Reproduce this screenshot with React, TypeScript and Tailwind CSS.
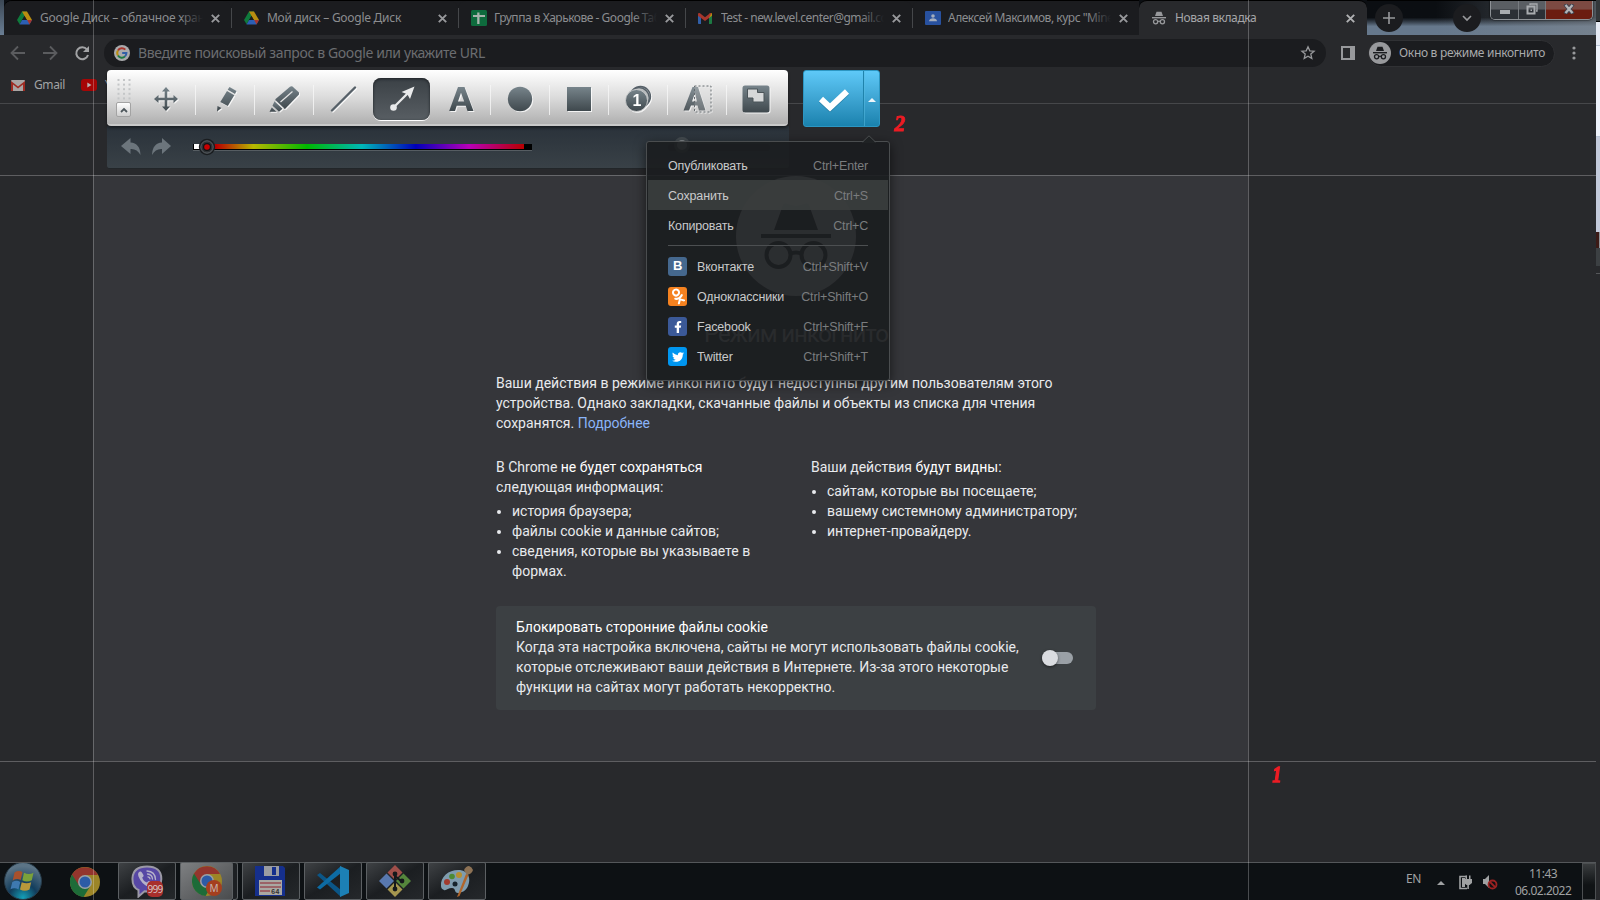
import type { ReactNode } from "react";
import { FaFacebookF, FaOdnoklassniki, FaTwitter } from "react-icons/fa";

function DriveIcon() {
  return (
    <svg width="15" height="14" viewBox="0 0 15 14" className="shrink-0">
      <path d="M5 .5h5l-2.4 4.3L5 9 2.6 13.3 0 9z" fill="#0f7a3c" />
      <path d="M5 .5h5l5 8.5H9.8z" fill="#b98d10" />
      <path d="M5.1 9H15l-2.5 4.4h-10z" fill="#2c5fb4" />
      <path d="M10.2 9H15l-2.5 4.4z" fill="#a8362c" />
      <path d="M7.5 5L9.8 9H5.2z" fill="#1b1c1f" />
    </svg>
  );
}

function SheetsIcon() {
  return (
    <svg width="16" height="16" viewBox="0 0 16 16" className="shrink-0">
      <rect width="16" height="16" rx="1.5" fill="#0e6b3d" />
      <path d="M2 5h12v2H2zM6.2 2.5h2.3V14H6.2z" fill="#a9b3ad" />
    </svg>
  );
}

function GmailIcon() {
  return (
    <svg width="14" height="11" viewBox="0 0 14 11" className="shrink-0">
      <path d="M0 2v8.2c0 .5.3.8.8.8H3V4z" fill="#315fa8" />
      <path d="M14 2v8.2c0 .5-.3.8-.8.8H11V4z" fill="#1d7a43" />
      <path d="M11 1l2-1c.6 0 1 .5 1 1.2v1.6L11 5z" fill="#b98d10" />
      <path d="M0 2.8V1.2C0 0 1.200-.2 2 .3l5 3.900 5-3.900c.5-.3 1-.2 1.300 0L11 5 7 8 3 5z" fill="#a8362c" />
    </svg>
  );
}

function ClassroomIcon() {
  return (
    <svg width="16" height="14" viewBox="0 0 16 14" className="shrink-0">
      <rect width="16" height="14" rx="1" fill="#28519f" />
      <circle cx="8" cy="5" r="1.8" fill="#a5aebd" />
      <path d="M4 10.300c0-2 2-3 4-3s4 1 4 3z" fill="#a5aebd" />
    </svg>
  );
}

function Incognito({ size, color }: { size: number; color: string }) {
  return (
    <svg width={size} height={size} viewBox="0 0 70 70" fill="none" className="shrink-0">
      <path d="M13 29 22 4q1-2 4-1.300l6 1.800q3 .8 6 0l6-1.800q3-.7 4 1.300l9 25z" fill={color} />
      <path d="M0 33h70v4H0z" fill={color} />
      <circle cx="17.500" cy="54" r="12" stroke={color} strokeWidth="4" />
      <circle cx="52.500" cy="54" r="12" stroke={color} strokeWidth="4" />
      <path d="M29 53q6-3 12 0" stroke={color} strokeWidth="4" />
    </svg>
  );
}

function IncognitoSmall({ color }: { color: string }) {
  return (
    <svg width="14" height="14" viewBox="0 0 14 14" fill="none" className="shrink-0">
      <path d="M3 5l1.500-4.300h5L11 5z" fill={color} />
      <path d="M0 6h14v1.400H0z" fill={color} />
      <circle cx="3.600" cy="10.700" r="2.100" stroke={color} strokeWidth="1.300" />
      <circle cx="10.400" cy="10.700" r="2.100" stroke={color} strokeWidth="1.300" />
      <path d="M5.700 10.300h2.600" stroke={color} strokeWidth="1.200" />
    </svg>
  );
}

function Close({ color }: { color: string }) {
  return (
    <svg width="9" height="9" viewBox="0 0 9 9" className="shrink-0">
      <path d="M.8.8l7.400 7.400M8.200.8L.8 8.200" stroke={color} strokeWidth="1.900" />
    </svg>
  );
}

function Tab({ icon, title, fade, last, spacing }: { icon: ReactNode; title: string; fade?: boolean; last?: boolean; spacing: string }) {
  return (
    <div className="relative flex h-[34px] w-[227px] items-center rounded-t-lg bg-[#1b1c1f] pl-[13px]">
      <div className="flex w-[23px] items-center">{icon}</div>
      <div className={"relative w-[163px] overflow-hidden text-[12px] whitespace-nowrap text-[#8b8d90] " + spacing}>
        {title}
        {fade && <div className="absolute top-0 right-0 h-full w-6 bg-linear-to-r from-transparent to-[#1b1c1f]" />}
      </div>
      <div className="ml-[8px]">
        <Close color="#98999c" />
      </div>
      {!last && <div className="absolute top-[7px] -right-px z-10 h-5 w-px bg-[#45474a]" />}
    </div>
  );
}

function TabStrip() {
  return (
    <div className="flex h-[35px] bg-linear-to-b from-[#0b0e12] from-50% to-[#66788c] to-75%">
      <div className="h-[35px] w-1 bg-linear-to-b from-[#3c4855] to-[#6a7e94]" />
      <div className="flex h-[35px] rounded-tl-lg border-t border-black bg-[#1b1c1f]">
        <Tab icon={<DriveIcon />} title="Google Диск – облачное хранилище" fade spacing="tracking-[-0.24px]" />
        <Tab icon={<DriveIcon />} title="Мой диск – Google Диск" spacing="tracking-[-0.27px]" />
        <Tab icon={<SheetsIcon />} title="Группа в Харькове - Google Таблицы" fade spacing="tracking-[-0.48px]" />
        <Tab icon={<GmailIcon />} title="Test - new.level.center@gmail.com" fade spacing="tracking-[-0.5px]" />
        <Tab icon={<ClassroomIcon />} title={'Алексей Максимов, курс "Minecraft"'} fade last spacing="tracking-[-0.48px]" />
      </div>
      <div className="flex h-[35px] w-[228px] items-center rounded-t-lg border-t border-black bg-[#28292c] pl-[13px]">
        <div className="flex w-[23px] items-center">
          <IncognitoSmall color="#98999c" />
        </div>
        <div className="w-[163px] text-[12px] tracking-[-0.4px] text-[#a5a6a9]">Новая вкладка</div>
        <div className="ml-[8px]">
          <Close color="#b0b1b3" />
        </div>
      </div>
      <div className="flex h-[35px] flex-1 border-t border-black bg-linear-to-r from-transparent from-30% to-[#7f8790]/60">
        <div className="mt-[3px] ml-2 flex size-7 items-center justify-center rounded-full bg-[#1b1c1f]">
          <svg width="12" height="12" viewBox="0 0 12 12">
            <path d="M6 0v12M0 6h12" stroke="#98999c" strokeWidth="1.600" />
          </svg>
        </div>
        <div className="mt-[3px] ml-[50px] flex size-7 items-center justify-center rounded-full bg-[#1b1c1f]">
          <svg width="10" height="7" viewBox="0 0 10 7" fill="none">
            <path d="M1 1l4 4 4-4" stroke="#98999c" strokeWidth="1.700" />
          </svg>
        </div>
        <div className="ml-[9px] flex h-[19px] w-[103px] overflow-hidden rounded-b-[5px] border border-t-0 border-[#8d9196] shadow-[0_0_2px_#000]">
          <div className="flex w-[28px] items-center justify-center border-r border-[#777b80] bg-linear-to-b from-[#5a5e63] from-45% to-[#2c3036] to-50%">
            <div className="mt-[3px] h-1 w-2.5 bg-[#a9acb0]" />
          </div>
          <div className="flex w-[27px] items-center justify-center border-r border-[#777b80] bg-linear-to-b from-[#5a5e63] from-45% to-[#2c3036] to-50%">
            <svg width="12" height="12" viewBox="0 0 12 12" fill="none" className="-mt-0.5">
              <path d="M4 2V1h7v7h-1" stroke="#a9acb0" strokeWidth="1.300" />
              <rect x="1.500" y="3.500" width="7" height="7" stroke="#a9acb0" strokeWidth="2" />
              <rect x="4.500" y="6.500" width="1.500" height="1.500" fill="#a9acb0" />
            </svg>
          </div>
          <div className="flex flex-1 items-center justify-center bg-linear-to-b from-[#7c4a42] from-45% to-[#6b1c10] to-50%">
            <svg width="12" height="10" viewBox="0 0 12 10" className="-mt-0.5">
              <path d="M2 0l8 10M10 0L2 10" stroke="#41434f" strokeWidth="4" />
              <path d="M2.500 1l7 8M9.500 1l-7 8" stroke="#b4b5b8" strokeWidth="2.300" />
            </svg>
          </div>
        </div>
      </div>
    </div>
  );
}

function AddressBar() {
  return (
    <div className="flex h-[35px] items-center bg-[#28292c] pt-px">
      <svg width="104" height="28" viewBox="0 0 104 28" fill="none" className="shrink-0">
        <path d="M25 14H12M18 7.500L11.500 14l6.500 6.500" stroke="#5b5c5f" strokeWidth="1.800" />
        <path d="M43 14h13M50 7.500l6.500 6.500-6.500 6.500" stroke="#5b5c5f" strokeWidth="1.800" />
        <path d="M87 10.500A6 6 0 1 0 88 16" stroke="#a2a3a5" strokeWidth="2" />
        <path d="M89 7v6h-6z" fill="#a2a3a5" />
      </svg>
      <div className="flex h-7 w-[1222px] items-center rounded-full bg-[#1b1c1f] pl-2.5">
        <svg width="16" height="16" viewBox="0 0 16 16" fill="none">
          <circle cx="8" cy="8" r="8" fill="#a9aaac" />
          <path d="M4 5.500A4.500 4.500 0 0 1 11.300 4.700" stroke="#a8362c" strokeWidth="2" />
          <path d="M4 5.500a4.500 4.500 0 0 0 0 5" stroke="#b98d10" strokeWidth="2" />
          <path d="M4 10.500a4.500 4.500 0 0 0 7 .9" stroke="#1d7a43" strokeWidth="2" />
          <path d="M8.200 8h4.200q0 2-1.400 3.400" stroke="#315fa8" strokeWidth="2" />
        </svg>
        <div className="mb-0.5 ml-2 flex-1 text-[14px] tracking-[-0.38px] text-[#6b6d70]">Введите поисковый запрос в Google или укажите URL</div>
        <svg width="16" height="16" viewBox="0 0 16 16" fill="none" className="mr-[10px]">
          <path d="M8 1.800l1.800 4 4.300.4-3.300 2.900 1 4.300L8 11.200l-3.800 2.200 1-4.300L1.900 6.200l4.300-.4z" stroke="#98999c" strokeWidth="1.300" />
        </svg>
      </div>
      <div className="ml-[15px] h-[14px] w-[14px] border-2 border-r-[5px] border-[#98999c]" />
      <div className="ml-[13px] flex h-[27px] w-[187px] items-center rounded-full border border-[#303134] bg-[#1b1c1f]">
        <div className="flex size-[22px] items-center justify-center rounded-full bg-[#98999c]">
          <IncognitoSmall color="#1b1c1f" />
        </div>
        <div className="ml-2 text-[12px] tracking-[-0.3px] whitespace-nowrap text-[#a9aaac]">Окно в режиме инкогнито</div>
      </div>
      <svg width="4" height="16" viewBox="0 0 4 16" fill="#98999c" className="ml-[17px]">
        <circle cx="2" cy="3" r="1.600" />
        <circle cx="2" cy="8" r="1.600" />
        <circle cx="2" cy="13" r="1.600" />
      </svg>
    </div>
  );
}

function Bookmarks() {
  return (
    <div className="flex h-[34px] items-center border-b border-[#46474a] bg-[#28292c] pb-[3px] pl-[11px] text-[12px] text-[#a2a3a5]">
      <svg width="14" height="11" viewBox="0 0 14 11">
        <rect width="14" height="11" rx="1" fill="#a9a5a4" />
        <path d="M0 11V1l7 5.500L14 1v10h-2V4.500L7 8.500 2 4.500V11z" fill="#9e2b22" />
      </svg>
      <span className="ml-[9px] w-[47px] tracking-[-0.4px]">Gmail</span>
      <svg width="16" height="12" viewBox="0 0 16 12">
        <rect width="16" height="12" rx="3" fill="#a60606" />
        <path d="M6.300 3.500v5L10.500 6z" fill="#b9b2b2" />
      </svg>
      <span className="ml-2">YouTube</span>
    </div>
  );
}

function IncognitoPage() {
  return (
    <div className="h-[758px] bg-[#28292c] pt-[71px] pl-[93px] text-[#e8eaed]">
      <div className="flex h-[586px] w-[1155px] flex-col bg-[#35363a] pl-[403px] font-[Roboto,sans-serif] text-[14px] leading-5">
        <div className="flex w-[600px] flex-col items-center">
          <div className="mt-px flex size-[120px] items-center justify-center rounded-full bg-[#d5d8dc]">
            <Incognito size={70} color="#2a2c2f" />
          </div>
          <div className="mt-[22px] mb-px flex h-8 items-center text-[24px] tracking-[-1.1px] whitespace-nowrap text-[#b9bbbe]">Режим инкогнито</div>
        </div>
        <p className="mt-[22px] w-[600px]">
          Ваши действия в режиме инкогнито будут недоступны другим пользователям этого
          <br />
          устройства. Однако закладки, скачанные файлы и объекты из списка для чтения
          <br />
          сохранятся. <span className="text-[#8ab4f8]">Подробнее</span>
        </p>
        <div className="mt-6 flex h-[149px] w-[600px]">
          <div className="w-[315px] whitespace-nowrap">
            <div>
              В Chrome <span className="text-white">не будет сохраняться</span>
              <br />
              следующая информация:
            </div>
            <ul className="mt-1 list-disc pl-4">
              <li>история браузера;</li>
              <li>файлы cookie и данные сайтов;</li>
              <li>
                сведения, которые вы указываете в<br />
                формах.
              </li>
            </ul>
          </div>
          <div className="whitespace-nowrap">
            <div>
              Ваши действия <span className="text-white">будут видны:</span>
            </div>
            <ul className="mt-1 list-disc pl-4">
              <li>сайтам, которые вы посещаете;</li>
              <li>вашему системному администратору;</li>
              <li>интернет-провайдеру.</li>
            </ul>
          </div>
        </div>
        <div className="flex h-[104px] w-[600px] items-center justify-between rounded bg-[#3c4043] pr-[23px] pl-5">
          <div className="mb-0.5 whitespace-nowrap">
            <div className="text-white">Блокировать сторонние файлы cookie</div>
            <div>
              Когда эта настройка включена, сайты не могут использовать файлы cookie,
              <br />
              которые отслеживают ваши действия в Интернете. Из-за этого некоторые
              <br />
              функции на сайтах могут работать некорректно.
            </div>
          </div>
          <div className="flex h-4 w-[31px] items-center">
            <div className="flex h-3 w-[31px] items-center rounded-full bg-[#9aa0a6]">
              <div className="size-4 rounded-full bg-[#dadce0] shadow-[0_1px_3px_rgba(0,0,0,0.5)]" />
            </div>
          </div>
        </div>
      </div>
    </div>
  );
}

function Chrome() {
  return (
    <svg width="30" height="30" viewBox="0 0 30 30">
      <circle cx="15" cy="15" r="15" fill="#9c8527" />
      <path d="M15 15L2 7.500A15 15 0 0 0 13.500 30L21 18z" fill="#1d6b38" />
      <path d="M2 7.500A15 15 0 0 1 28 8H15L9 18.500z" fill="#93352d" />
      <circle cx="15" cy="15" r="7" fill="#9aa0a6" />
      <circle cx="15" cy="15" r="5.500" fill="#2c5ba6" />
    </svg>
  );
}

function Viber() {
  return (
    <svg width="32" height="33" viewBox="0 0 32 33" fill="none">
      <path d="M16 1.500c-9 0-14 4-14.500 11.500-.3 6 1.500 10 6 12v6.500l6-5.200c10 .7 16.300-2.300 16.800-12C30.500 5.500 25 1.500 16 1.500z" fill="#5747a5" stroke="#9b99a6" strokeWidth="2" />
      <path d="M9 6.500c-2 1-2.300 2.500-1.500 5 2 5 5.500 8.500 10 10.500 2 .7 3.500-.3 4.500-2 .4-1-.2-1.600-3.600-3.800-1-.4-1.700.6-2.400 1.300-2.500-.8-4-2.500-4.800-5 1-.7 1.800-1.300 1.200-2.500C11 7.500 10.300 6 9 6.500z" fill="#b5b1c9" />
      <path d="M16 6c5 .3 8.300 3.500 8.500 8.500M16.500 9c3 .3 4.800 2 5 5M17 11.800c1.300.2 1.900.8 2 2" stroke="#b5b1c9" strokeWidth="1.300" strokeLinecap="round" />
    </svg>
  );
}

function TaskButton({ active, children }: { active?: boolean; children: ReactNode }) {
  return (
    <div
      className={
        "relative flex h-[38px] items-center justify-center rounded-[2px] border border-[#5c6063] " +
        (active ? "w-[53px] bg-linear-to-br from-[#7e8082] to-[#4a4c4e]" : "w-[58px] bg-linear-to-br from-[#3f4245] via-[#1b1e21] to-[#25282b]")
      }
    >
      {children}
    </div>
  );
}

function Taskbar() {
  return (
    <div className="flex h-[38px] border-t border-[#54575a] bg-[#0d1114]">
      <svg width="46" height="38" viewBox="0 0 46 38" className="shrink-0">
        <defs>
          <radialGradient id="orb" cx=".5" cy=".95" r=".85">
            <stop offset="0" stopColor="#14a0b8" />
            <stop offset=".45" stopColor="#123d5c" />
            <stop offset="1" stopColor="#5c7486" />
          </radialGradient>
        </defs>
        <circle cx="23" cy="18" r="18.500" fill="url(#orb)" stroke="#273c4a" />
        <path d="M14.500 9.500q4-2.500 8-.5l-1.800 8q-4-2-8 .5z" fill="#a8512d" />
        <path d="M24 9.800q5 2.500 9.500 0l-1.700 7.500q-5 2.500-9.500 0z" fill="#7ba13a" />
        <path d="M12.300 19q4.500-2.500 8 0l-1.800 7.500q-4-2.500-8-.2z" fill="#3e79b0" />
        <path d="M21.700 19.200q5 2.300 9.500 0l-1.700 7.300q-4.800 2.500-9.500 0z" fill="#b8983a" />
      </svg>
      <div className="ml-6 flex w-[48px] items-center">
        <Chrome />
      </div>
      <div className="-mt-px flex gap-1">
        <TaskButton>
          <div className="relative flex h-[33px] w-[32px] items-center justify-center">
            <Viber />
            <div className="absolute top-[16px] left-[16px] flex h-4 w-4 items-center justify-center rounded-[5px] bg-[#a82f2c] text-[10px] leading-4 tracking-[-0.7px] text-[#d5c4c4]">
              <span>999</span>
            </div>
          </div>
        </TaskButton>
        <div className="flex">
          <TaskButton active>
            <Chrome />
            <div className="absolute right-[10px] bottom-[3px] size-4 rounded-full bg-[#a53f1f] text-center text-[10px] leading-4 text-[#c5b5ae]">M</div>
          </TaskButton>
          <div className="h-[38px] w-[5px] rounded-r-[3px] border border-l-0 border-[#5c6063] bg-[#1d2023]" />
        </div>
        <TaskButton>
          <svg width="31" height="32" viewBox="0 0 31 32" className="mr-0.5">
            <path d="M0 1h28l2 2v28H0z" fill="#152f8c" />
            <path d="M9 1h15v10H9z" fill="#9a9ca2" />
            <path d="M17 2h4v8h-4z" fill="#152f8c" />
            <path d="M4 15h23v15H4z" fill="#a9a7a2" />
            <path d="M5 18h21M5 22h21M5 26h10" stroke="#8d1f2c" strokeWidth="1" />
            <text x="16" y="29" fontSize="7" fontWeight="700" fontFamily="Liberation Mono, monospace" fill="#333">64</text>
          </svg>
        </TaskButton>
        <TaskButton>
          <svg width="32" height="31" viewBox="0 0 32 31">
            <path d="M0 9l3-2 21 17v7z" fill="#0b5687" />
            <path d="M0 21.500l3 2L24 7V0z" fill="#0d6ba3" />
            <path d="M23 0l9 4v23l-9 4z" fill="#1c80b5" />
          </svg>
        </TaskButton>
        <TaskButton>
          <svg width="32" height="32" viewBox="0 0 32 32">
            <path d="M16 0l7.500 7.500L16 15 8.500 7.500z" fill="#a04f4a" />
            <path d="M24.500 8.500L32 16l-7.500 7.500L17 16z" fill="#55863c" />
            <path d="M7.500 8.500L15 16l-7.500 7.500L0 16z" fill="#5878ae" />
            <path d="M16 17l7.500 7.500L16 32l-7.500-7.500z" fill="#a5964f" />
            <path d="M16 9v15M16 11l6 5" stroke="#15181b" strokeWidth="2" />
            <circle cx="16" cy="9" r="2.400" fill="#15181b" />
            <circle cx="16" cy="24" r="2.400" fill="#15181b" />
            <circle cx="23" cy="16" r="2.400" fill="#15181b" />
          </svg>
        </TaskButton>
        <TaskButton>
          <svg width="34" height="32" viewBox="0 0 34 32">
            <path d="M1 21C0 11 10 4 20 5c9 1 11 9 8 16-2 5-7 7-10 7-4 0-2-5-6-5s-6 3-8 2-3-2-3-4z" fill="#7f9cae" />
            <circle cx="7" cy="17" r="3" fill="#a13b2e" />
            <circle cx="12" cy="11.500" r="2.800" fill="#4c8a34" />
            <circle cx="19" cy="10" r="3" fill="#b8902f" />
            <circle cx="15" cy="19" r="2.500" fill="#16242d" />
            <path d="M26 9l2.500 1-9 21-2.500 1z" fill="#b0652a" />
            <path d="M24 5q2-4 5-4 3 1 4 4-1 4-6 5z" fill="#8d7255" />
          </svg>
        </TaskButton>
      </div>
      <div className="ml-auto flex items-center text-[12px] text-[#a0a2a3]">
        <span className="mb-[5px] w-[31px] tracking-[-0.5px]">EN</span>
        <div className="mt-0.5 h-0 w-0 border-x-4 border-b-4 border-x-transparent border-b-[#a0a2a3]" />
        <svg width="15" height="16" viewBox="0 0 15 16" fill="none" className="mt-px ml-[13px]">
          <path d="M9 2.500H2v12h7" stroke="#a0a2a3" strokeWidth="1.600" />
          <path d="M4 4h3v9H4z" fill="#a0a2a3" />
          <path d="M6 5h8v4l-2.500 2H8.500L6 9zM7.500 1.500h1.500V5H7.500zM11 1.500h1.500V5H11zM9.300 11h1.600v4H9.300z" fill="#a0a2a3" />
        </svg>
        <svg width="16" height="16" viewBox="0 0 16 16" fill="none" className="mt-px ml-[9px]">
          <path d="M1 5h2l4-4v13L3 10H1z" fill="#a0a2a3" />
          <circle cx="10.500" cy="10.500" r="4" stroke="#9b2222" strokeWidth="1.800" />
          <path d="M8 8l5 5" stroke="#9b2222" strokeWidth="1.800" />
        </svg>
        <div className="mt-px ml-[17px] flex w-[67px] flex-col leading-[17px] tracking-[-0.5px]">
          <span className="pl-[14px]">11:43</span>
          <span>06.02.2022</span>
        </div>
        <div className="h-full w-[14px] border border-[#4c4f51] bg-linear-to-b from-[#3a3d3f] to-[#101315] to-60%" />
      </div>
    </div>
  );
}

const dark = "url(#steel)";

const tools: { name: string; rule: boolean; icon: ReactNode }[] = [
  {
    name: "move",
    rule: true,
    icon: <path d="M15 3l4 4.500h-2.700v6.200h6.200V11L27 15l-4.500 4v-2.700h-6.200v6.200H19L15 27l-4-4.500h2.700v-6.200H7.500V19L3 15l4.500-4v2.700h6.200V7.500H11z" fill={dark} />,
  },
  {
    name: "pencil",
    rule: true,
    icon: <path d="M19.500 3l7 4-1.500 3-7.300-4.200zM17 7l7.300 4.300L17.800 22l-7.500-4zM7.500 22l4 2-4.500 3.500z" fill={dark} />,
  },
  {
    name: "marker",
    rule: true,
    icon: (
      <>
        <path d="M23.500 2.500l6 5.500c1 1 .8 2 0 3L16 25l-2.500-1.300-6.700-6.400-.5-2L21 2.700q1.300-1 2.500-.2z" fill={dark} />
        <path d="M5.500 17.300l8 7.500-3.500 3-6.500-6zM2.800 23.500l4.700 4.300H.5z" fill={dark} />
        <path d="M23.500 7.500L11.500 18M6.500 17l8 7.500" stroke="#e4e4e4" strokeWidth="1.200" />
      </>
    ),
  },
  { name: "line", rule: false, icon: <path d="M4 26.500L27 3.500" stroke="#566068" strokeWidth="2.400" strokeLinecap="round" /> },
  { name: "arrow", rule: false, icon: null },
  {
    name: "text",
    rule: true,
    icon: <path d="M12 3h6.500l9 24h-6l-1.800-5.300h-9L9 27H3.200zM15 8.800l-3 8.700h6.200z" fill={dark} fillRule="evenodd" />,
  },
  { name: "circle", rule: true, icon: <circle cx="15" cy="15" r="12.200" fill={dark} /> },
  { name: "square", rule: true, icon: <path d="M3 3h24v24H3z" fill={dark} /> },
  {
    name: "steps",
    rule: true,
    icon: (
      <>
        <circle cx="17.500" cy="12.500" r="10" fill="#b9bcbe" stroke="#566068" strokeWidth="1.300" />
        <circle cx="16" cy="14" r="10.300" fill="#b9bcbe" stroke="#566068" strokeWidth="1.300" />
        <circle cx="13.500" cy="16.500" r="11" fill={dark} stroke="#d5d5d5" strokeWidth=".8" />
        <text x="9.500" y="22" fontSize="16" fontWeight="700" fontFamily="Liberation Sans, sans-serif" fill="#fff">1</text>
      </>
    ),
  },
  {
    name: "blur",
    rule: true,
    icon: (
      <>
        <path d="M10.500 3H16l7.500 23.500H17l-1.500-5H9l-2 5H1.500zM13 9l-3 8.500h5z" fill={dark} fillRule="evenodd" opacity=".9" />
        <path d="M12.500 2h16.500v26H12.500z" fill="#ccc" fillOpacity=".25" stroke="#666c70" strokeWidth="1" strokeDasharray="2 2" />
      </>
    ),
  },
  {
    name: "crop",
    rule: false,
    icon: (
      <>
        <rect x="1.500" y="1.500" width="27" height="27" rx="2.500" fill={dark} />
        <path d="M6.500 5h10v3.500h6.500V18H12v-4H6.500z" fill="#d6d8d9" stroke="#4b5459" strokeWidth="1" />
      </>
    ),
  },
];

function ShotToolbar() {
  return (
    <div className="absolute top-[70px] left-[107px] flex flex-col">
      <div className="flex">
        <div className="z-10 flex h-14 w-[681px] rounded-[4px] border-b-2 border-[#c9c9c9] bg-linear-to-b from-white via-[#dcdcdc] via-50% to-[#b0b0b0] shadow-[0_2px_3px_rgba(0,0,0,0.45)]">
          <div className="flex w-[30px] flex-col items-center pt-2 pl-[5px]">
            <svg width="14" height="22" viewBox="0 0 14 22" className="-ml-0.5">
              {[0, 1, 2, 3, 4].map((r) =>
                [0, 1, 2].map((c) => <rect key={r + "-" + c} x={0.5 + c * 5.5} y={1 + r * 4.600} width="2" height="2" fill="#c4c6c7" />),
              )}
            </svg>
            <div className="mt-[2px] -ml-[2px] flex h-[15px] w-[15px] items-center justify-center rounded-[2px] border border-[#a3a3a3] bg-linear-to-b from-white to-[#cfcfcf]">
              <svg width="8" height="6" viewBox="0 0 8 6" fill="none">
                <path d="M1 5l3-3 3 3" stroke="#4e575c" strokeWidth="1.800" />
              </svg>
            </div>
          </div>
          {tools.map((t) => (
            <div key={t.name} className="relative flex w-[59px] items-center justify-center">
              {t.icon ? (
                <svg width="30" height="30" viewBox="0 0 30 30" fill="none" className="mt-1 mr-px drop-shadow-[1px_1px_0_rgba(255,255,255,0.8)]">
                  <defs>
                    <linearGradient id="steel" x1="0" y1="0" x2="0" y2="1">
                      <stop offset="0" stopColor="#77848b" />
                      <stop offset="1" stopColor="#3f484d" />
                    </linearGradient>
                  </defs>
                  {t.icon}
                </svg>
              ) : (
                <div className="mt-1 mr-0.5 flex h-[42px] w-[57px] items-center justify-center rounded-lg bg-linear-to-b from-[#3b4146] to-[#585e63] shadow-[inset_0_1px_3px_#1c2024,0_1px_0_#fff]">
                  <svg width="26" height="26" viewBox="0 0 26 26">
                    <path d="M4 22L20 6" stroke="#e9eaeb" strokeWidth="2.300" />
                    <circle cx="4.500" cy="21.500" r="3.300" fill="#e9eaeb" />
                    <path d="M25.500.5L21 13l-2.700-4.800L12.500 6z" fill="#e9eaeb" />
                  </svg>
                </div>
              )}
              {t.rule && <div className="absolute top-[15px] right-0 h-[30px] w-px bg-linear-to-b from-[#f5f5f5] to-[#ebebeb]" />}
            </div>
          ))}
        </div>
        <div className="ml-[15px] flex h-[57px] w-[77px] overflow-hidden rounded-[3px] border border-[#2c96c2] bg-linear-to-b from-[#5ec9f8] to-[#1982ae]">
          <div className="flex w-[60px] items-center justify-center border-r border-[#1f83ac]">
            <svg width="32" height="24" viewBox="0 0 32 24" fill="none" className="mt-0.5">
              <path d="M3 12l9 8.500L29 4.500" stroke="#1b6a8c" strokeOpacity=".5" strokeWidth="6" />
              <path d="M3 11l9 8.500L29 3.500" stroke="#fff" strokeWidth="6" strokeLinejoin="miter" />
            </svg>
          </div>
          <div className="flex flex-1 items-center justify-center border-l border-[#58bbe2]/50">
            <div className="mt-0.5 h-0 w-0 border-x-4 border-b-4 border-x-transparent border-b-[#eef6fa]" />
          </div>
        </div>
      </div>
      <div className="-mt-px flex h-[43px] w-[682px] items-center rounded-b-[3px] border-b border-[#222629] bg-linear-to-b from-[#2a323a] to-[#394147] pl-[14px]">
        <svg width="52" height="20" viewBox="0 0 52 20">
          <path d="M9.500 1v4.500Q19 6 19.500 18 16 11.500 9.500 12v5L0 9z" fill="#6c757c" />
          <path d="M41 1v4.500Q31.500 6 31 18q3.500-6.500 10-6v5l9-8z" fill="#6c757c" />
        </svg>
        <div className="ml-[20px] flex h-[7px] w-[339px] items-center border-b border-[#565d62] bg-black pl-px">
          <div className="h-[5px] w-[6px] bg-white" />
          <div className="h-[5px] w-[324px] bg-[linear-gradient(90deg,#b80000_0%,#b80000_5%,#b8b800_16.500%,#00b800_33%,#00b8b8_50%,#0000b8_66.600%,#b800b8_83%,#b80000_100%)]" />
        </div>
        <svg width="18" height="18" viewBox="0 0 18 18" className="relative -ml-[334px]">
          <circle cx="9" cy="9" r="8.200" fill="#1a1d20" />
          <circle cx="9" cy="9" r="6.200" fill="#2d3135" stroke="#5d6367" strokeWidth="1" />
          <circle cx="9" cy="9" r="4" fill="#121416" />
          <circle cx="9" cy="9" r="2.800" fill="#c80000" />
        </svg>
        <div className="ml-[452px] flex h-[7px] w-[102px] items-center rounded bg-[#22282d] pl-1.5">
          <div className="-mt-1 size-4 shrink-0 rounded-full border-[3px] border-[#464d52] bg-[#8a8f93]" />
        </div>
      </div>
    </div>
  );
}

const actions = [
  { label: "Опубликовать", keys: "Ctrl+Enter" },
  { label: "Сохранить", keys: "Ctrl+S" },
  { label: "Копировать", keys: "Ctrl+C" },
];

const networks = [
  { label: "Вконтакте", keys: "Ctrl+Shift+V", color: "bg-[#45688e]", icon: <b className="text-[13px]">B</b> },
  { label: "Одноклассники", keys: "Ctrl+Shift+O", color: "bg-[#f58220]", icon: <FaOdnoklassniki className="size-[16px] -rotate-[30deg]" /> },
  { label: "Facebook", keys: "Ctrl+Shift+F", color: "bg-[#3b5998]", icon: <FaFacebookF className="mt-0.5 size-3" /> },
  { label: "Twitter", keys: "Ctrl+Shift+T", color: "bg-[#0096f0]", icon: <FaTwitter className="mt-0.5 size-3" /> },
];

function ActionMenu() {
  return (
    <div className="absolute top-[141px] left-[646px] z-20 h-[240px] w-[244px] rounded-[3px] border border-[#4a4d4f] bg-[#1a1d1f]/91 px-px pt-[8px] font-['Liberation_Sans',Arial,sans-serif] text-[12.500px] tracking-[-0.17px] text-[#c9cacb] shadow-[0_3px_12px_rgba(0,0,0,0.6)]">
      <svg width="14" height="8" viewBox="0 0 14 8" className="absolute -top-[7px] left-[215px]">
        <path d="M1 7l6-6 6 6v1H1z" fill="#1f2224" />
        <path d="M.5 7L7 .8 13.500 7" stroke="#4a4d4f" fill="none" />
      </svg>
      {actions.map((a, i) => (
        <div key={a.label} className={"flex h-[30px] items-center justify-between pt-0.5 pr-[20px] pl-5 " + (i === 1 ? "bg-[#3b3e3e]/90" : "")}>
          <span>{a.label}</span>
          <span className="text-[#7a7c7e]">{a.keys}</span>
        </div>
      ))}
      <div className="mt-[5px] mr-[20px] mb-[5px] ml-5 h-px bg-[#4c4f51]" />
      {networks.map((n) => (
        <div key={n.label} className="flex h-[30px] items-center pr-[20px] pl-5">
          <div className={"flex size-[19px] items-center justify-center rounded-[3px] text-white " + n.color}>{n.icon}</div>
          <span className="mt-0.5 ml-2.5 flex-1">{n.label}</span>
          <span className="mt-0.5 text-[#7a7c7e]">{n.keys}</span>
        </div>
      ))}
    </div>
  );
}

export default function App() {
  return (
    <div className="relative flex h-[900px] w-[1600px] overflow-hidden bg-[#28292c] font-['Noto_Sans','Open_Sans',sans-serif]">
      <div className="flex w-[1596px] flex-col">
        <TabStrip />
        <AddressBar />
        <Bookmarks />
        <IncognitoPage />
        <Taskbar />
      </div>
      <div className="flex w-1 flex-col">
        <div className="h-[22px] border-b border-black bg-[#33373a]" />
        <div className="h-[23px] bg-[#e6eaf4]" />
        <div className="h-[92px] border-y border-[#b9c4d6] bg-[#eef2fb]" />
        <div className="h-[95px] bg-[#c3cadb]" />
        <div className="h-[16px] border-r border-[#8d9196] bg-[#3b1a16]" />
        <div className="h-[18px] bg-[#3c4043]" />
        <div className="h-[8px] border-b border-[#55575a]" />
      </div>
      <div className="absolute top-0 left-[93px] h-full w-px bg-white/25" />
      <div className="absolute top-0 left-[1248px] h-full w-px bg-white/25" />
      <div className="absolute top-[175px] left-0 h-px w-[1596px] bg-white/25" />
      <div className="absolute top-[761px] left-0 h-px w-[1596px] bg-white/25" />
      <ShotToolbar />
      <ActionMenu />
      <div className="absolute top-[108px] left-[894px] scale-x-90 font-['Liberation_Serif',serif] text-[24px] leading-[30px] font-bold text-[#ed1c24] italic [-webkit-text-stroke:1px_#ed1c24]">2</div>
      <div className="absolute top-[759px] left-[1271px] scale-x-75 font-['Liberation_Serif',serif] text-[24px] leading-[30px] font-bold text-[#ed1c24] italic [-webkit-text-stroke:1.5px_#ed1c24]">1</div>
    </div>
  );
}
